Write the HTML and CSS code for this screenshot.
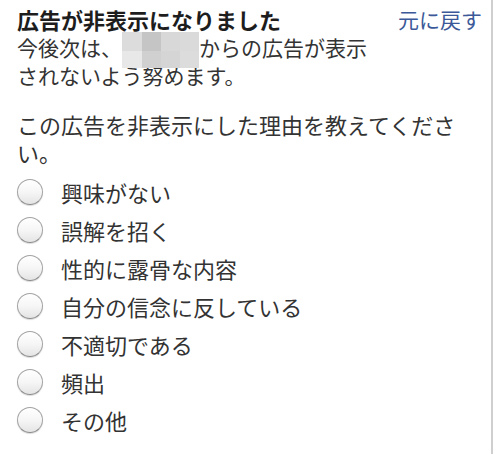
FILE: index.html
```html
<!DOCTYPE html>
<html lang="ja">

<head>
    <meta charset="UTF-8">
    <meta name="viewport" content="width=device-width, initial-scale=1.0">
    <title>広告が非表示になりました</title>
    <link rel="stylesheet" href="styles.css">
</head>

<body>
    <div class="panel">
        <div class="header">
            <div class="summary">
                <div class="title">広告が非表示になりました</div>
                <div class="desc">今後次は、<span class="blur"><span class="mosaic"><i class="c1"></i><i class="c2"></i><i class="c3"></i><i class="c4"></i><i class="c5"></i><i class="c6"></i><i class="c7"></i><i class="c8"></i></span></span>からの広告が表示されないよう努めます。</div>
            </div>
            <a class="undo" href="#">元に戻す</a>
        </div>

        <p class="question">この広告を非表示にした理由を教えてください。</p>

        <ul class="reasons">
            <li><span class="radio"></span>興味がない</li>
            <li><span class="radio"></span>誤解を招く</li>
            <li><span class="radio"></span>性的に露骨な内容</li>
            <li><span class="radio"></span>自分の信念に反している</li>
            <li><span class="radio"></span>不適切である</li>
            <li><span class="radio"></span>頻出</li>
            <li><span class="radio"></span>その他</li>
        </ul>
    </div>
</body>

</html>
```

FILE: styles.css
```css
body {
    margin: 0;
    background: #fff;
    color: #333;
    font-family: "Noto Sans CJK JP", "Noto Sans", sans-serif;
    font-size: 22px;
    line-height: 28px;
}

.panel {
    width: 493px;
    height: 454px;
    box-sizing: border-box;
    padding: 5px 9px 0 17px;
    border-right: 2px solid #cfcfcf;
}

.header {
    display: flex;
    gap: 10px;
}

.summary {
    flex: 1;
}

.title {
    font-weight: bold;
    color: #1d1d1d;
}

.desc {
    font-size: 21px;
    padding-right: 4px;
}

.blur {
    display: inline-block;
    position: relative;
    width: 77px;
    height: 20px;
    vertical-align: top;
}

/* pixelated name, spills over the next line like the original */
.mosaic {
    position: absolute;
    left: 0;
    top: -1px;
    width: 77px;
    height: 36px;
    display: flex;
    flex-wrap: wrap;
}

.mosaic i {
    display: block;
    width: 19px;
    height: 19px;
}

.mosaic i:nth-child(n+5) {
    height: 17px;
}

.mosaic i.c1,
.mosaic i.c5 {
    width: 20px;
}

.c1 { background: #dcdcdc; }
.c2 { background: #c5c5c5; }
.c3 { background: #d8d8d8; }
.c4 { background: #dadada; }
.c5 { background: #e8e8e8; }
.c6 { background: #d0d0d0; }
.c7 { background: #d5d5d5; }
.c8 { background: #dcdcdc; }

.undo {
    color: #3b5998;
    text-decoration: none;
    white-space: nowrap;
    font-size: 21px;
}

.question {
    margin: 21px 0 7px;
}

.reasons {
    list-style: none;
    margin: 0;
    padding: 0;
}

.reasons li {
    display: flex;
    align-items: center;
    height: 38px;
}

.radio {
    width: 26px;
    height: 26px;
    box-sizing: border-box;
    margin-right: 18px;
    border-radius: 50%;
    border: 1px solid #a3a3a3;
    border-bottom-color: #8a8a8a;
    background: linear-gradient(#ffffff, #f6f6f6 50%, #e4e4e4);
    box-shadow: 0 1px 1px rgba(0, 0, 0, 0.15);
}
```
